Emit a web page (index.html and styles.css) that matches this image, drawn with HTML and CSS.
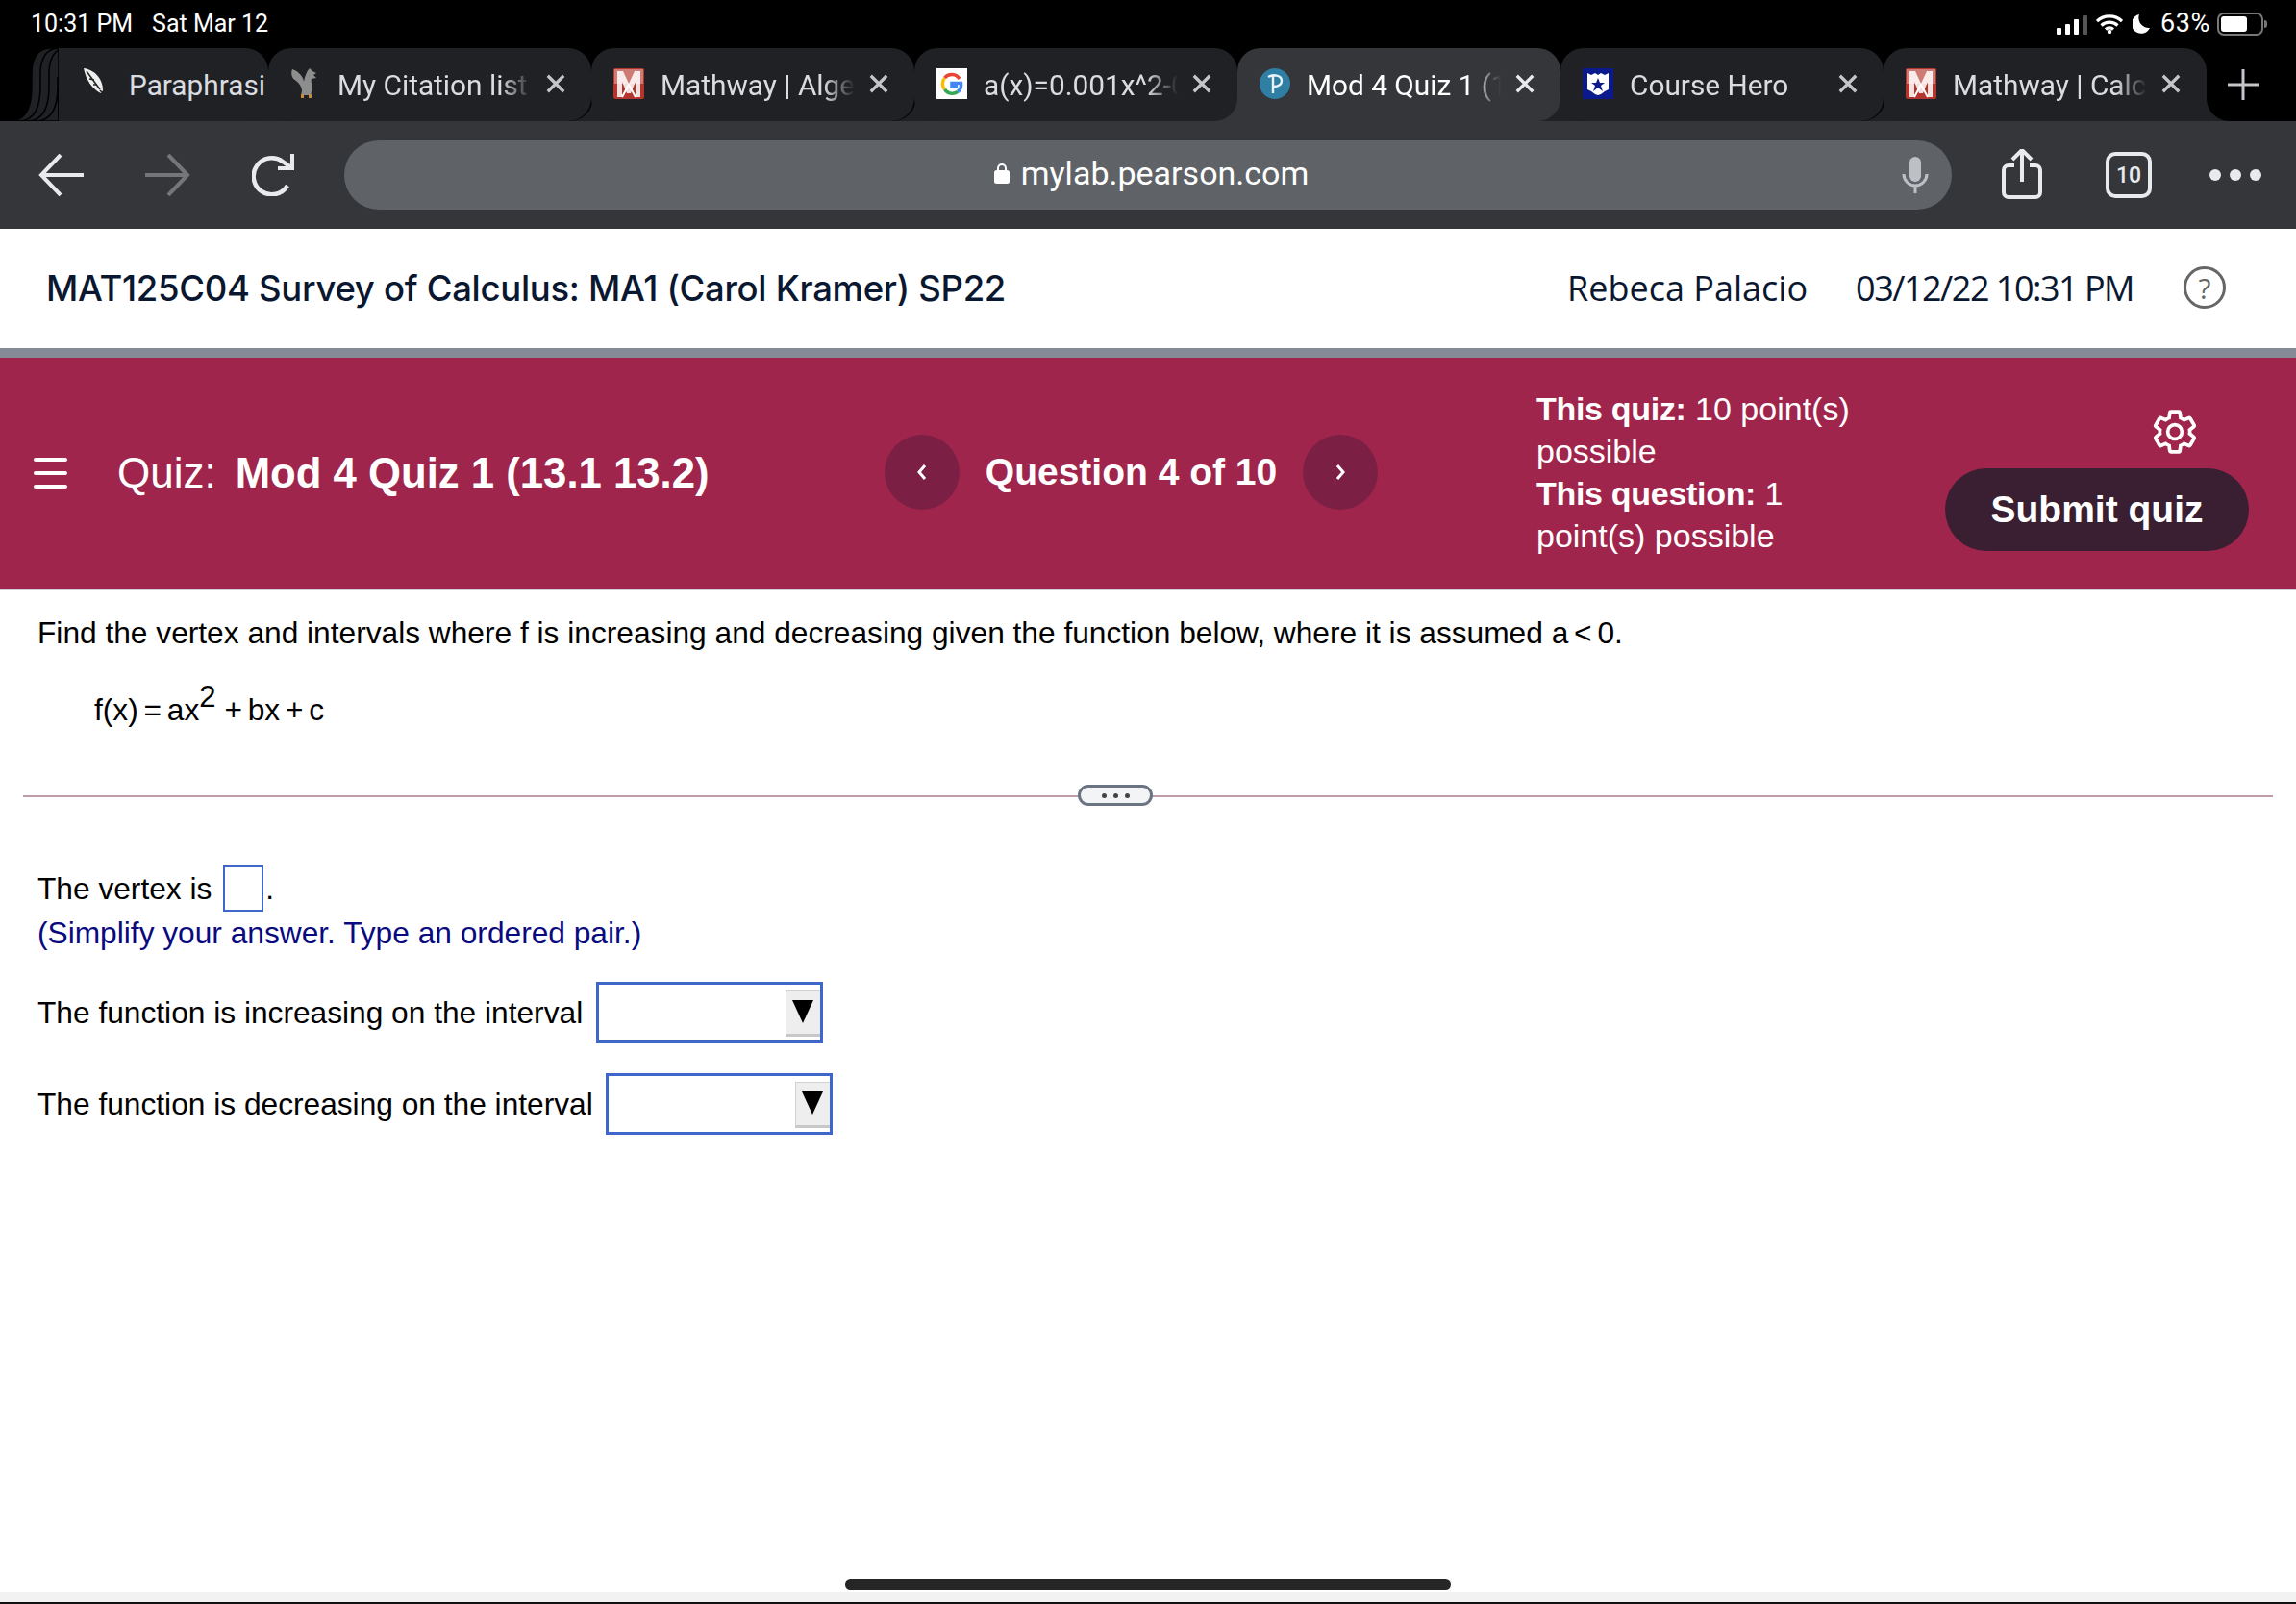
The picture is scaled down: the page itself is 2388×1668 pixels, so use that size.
FILE: index.html
```html
<!DOCTYPE html>
<html lang="en">
<head>
<meta charset="utf-8">
<title>Mod 4 Quiz 1</title>
<link rel="stylesheet" href="styles.css">
</head>
<body>
<div class="page">
  <div class="status">
    <div class="status-left"><span>10:31 PM</span><span>Sat Mar 12</span></div>
    <div class="status-right">
      <svg class="i-signal" viewBox="0 0 32 20"><rect x="0" y="13" width="5" height="7" rx="1" fill="#fff"/><rect x="9" y="9" width="5" height="11" rx="1" fill="#fff"/><rect x="18" y="4" width="5" height="16" rx="1" fill="#fff"/><rect x="27" y="0" width="5" height="20" rx="1" fill="#555"/></svg>
      <svg class="i-wifi" viewBox="0 0 28 20"><path d="M1 7a19 19 0 0 1 26 0M5.500 11.500a12.500 12.500 0 0 1 17 0M10 15.500a6 6 0 0 1 8 0" fill="none" stroke="#fff" stroke-width="3.200"/><circle cx="14" cy="18" r="2.200" fill="#fff"/></svg>
      <svg class="i-moon" viewBox="0 0 18 20"><path d="M7 0a10 10 0 1 0 11 14A10.500 10.500 0 0 1 7 0z" fill="#fff"/></svg>
      <span class="pct">63%</span>
      <div class="battery"><div class="battery-fill"></div></div>
    </div>
  </div>

  <div class="tabstrip">
    <svg class="stack" viewBox="0 0 61 76"><path d="M10 76C26 76 33 62 33 40V26C33 10 40 0 52 0H61V76z" fill="#202124" stroke="#000" stroke-width="1.500"/><path d="M19 76C35 76 42 62 42 40V26C42 10 49 0 61 0V76z" fill="#202124" stroke="#000" stroke-width="1.500"/><path d="M28 76C44 76 51 62 51 40V26C51 14 55 5 61 2V76z" fill="#202124" stroke="#000" stroke-width="1.500"/><path d="M37 76C53 76 60 62 60 40V30L61 76z" fill="#202124" stroke="#000" stroke-width="1.500"/></svg>
    <div class="tab tab-first">
      <svg class="fav fav-feather" viewBox="0 0 28 32"><path d="M0 0c10 1 20 10 20 23l-2 3C9 22 2 11 0 0z" fill="#eee"/><path d="M3 3l14 19M6 11l5 1M10 17l4 0M17 23l8 8" stroke="#222" stroke-width="1.500" fill="none"/></svg>
      <span class="tab-text">Paraphrasi</span>
    </div>
    <div class="tab">
      <svg class="fav" viewBox="0 0 32 32"><path d="M2 1c-2 5 0 10 4 12 4 3 6 7 6 11l-1 4h10l2-6c0-5-2-7-1-11l5-1-3-3 3-2-4-2-3-3c-3 3-5 8-6 14C14 10 9 3 2 1z" fill="#8d8d8d"/><rect x="11" y="27" width="3" height="4" fill="#c98a3c"/><rect x="19" y="27" width="3" height="4" fill="#c98a3c"/></svg>
      <span class="tab-text">My Citation list</span>
      <svg class="x" viewBox="0 0 24 24"><path d="M3 3l18 18M21 3L3 21"/></svg>
    </div>
    <div class="tab">
      <svg class="fav" viewBox="0 0 32 32"><rect width="32" height="32" rx="2" fill="#b3352d"/><rect x="1" y="1" width="30" height="15" fill="#cf7b75"/><path d="M4 30V3h6l6 13 6-13h6v27h-5V14l-5 12h-4L9 14v16z" fill="#fff" fill-opacity=".85"/><path d="M9 30l7-13 7 13" fill="none" stroke="#fff" stroke-width="2"/></svg>
      <span class="tab-text">Mathway | Algebra</span>
      <svg class="x" viewBox="0 0 24 24"><path d="M3 3l18 18M21 3L3 21"/></svg>
    </div>
    <div class="tab tab-before-active">
      <svg class="fav" viewBox="0 0 32 32"><rect width="32" height="32" fill="#fff"/><path d="M24 11a9.500 9.500 0 0 0-15.500-1" fill="none" stroke="#ea4335" stroke-width="3.500"/><path d="M8.500 10a9.500 9.500 0 0 0 0 12" fill="none" stroke="#fbbc05" stroke-width="3.500"/><path d="M8.500 22a9.500 9.500 0 0 0 13.500 2.500" fill="none" stroke="#34a853" stroke-width="3.500"/><path d="M22 24.500a9.500 9.500 0 0 0 3.500-9H16v3.500h6" fill="none" stroke="#4285f4" stroke-width="3.500"/></svg>
      <span class="tab-text">a(x)=0.001x^2-0.5x</span>
      <svg class="x" viewBox="0 0 24 24"><path d="M3 3l18 18M21 3L3 21"/></svg>
    </div>
    <div class="tab tab-active">
      <svg class="fav" viewBox="0 0 32 32"><circle cx="16" cy="16" r="16" fill="#2f7ea3"/><path d="M9 9c5-3 14-2 14 4s-6 6-9 6M14 8v18" fill="none" stroke="#e8f2f7" stroke-width="2.400"/></svg>
      <span class="tab-text">Mod 4 Quiz 1 (13.1 13.2)</span>
      <svg class="x" viewBox="0 0 24 24"><path d="M3 3l18 18M21 3L3 21"/></svg>
    </div>
    <div class="tab tab-after-active">
      <svg class="fav" viewBox="0 0 32 32"><rect width="32" height="32" fill="#0a1a8c"/><path d="M5 5l4 2 4-2 3 2 3-2 4 2 4-2v17l-4 2-4 3-3 1-3-1-4-3-4-2z" fill="#fff"/><path d="M16 10l2 5h5l-4 3 2 6-5-4-5 4 2-6-4-3h5z" fill="#0a1a8c"/></svg>
      <span class="tab-text">Course Hero</span>
      <svg class="x" viewBox="0 0 24 24"><path d="M3 3l18 18M21 3L3 21"/></svg>
    </div>
    <div class="tab tab-last">
      <svg class="fav" viewBox="0 0 32 32"><rect width="32" height="32" rx="2" fill="#b3352d"/><rect x="1" y="1" width="30" height="15" fill="#cf7b75"/><path d="M4 30V3h6l6 13 6-13h6v27h-5V14l-5 12h-4L9 14v16z" fill="#fff" fill-opacity=".85"/><path d="M9 30l7-13 7 13" fill="none" stroke="#fff" stroke-width="2"/></svg>
      <span class="tab-text">Mathway | Calculus</span>
      <svg class="x" viewBox="0 0 24 24"><path d="M3 3l18 18M21 3L3 21"/></svg>
    </div>
    <svg class="plus" viewBox="0 0 32 32"><path d="M16 0v32M0 16h32"/></svg>
  </div>

  <div class="toolbar">
    <svg class="nav-arrow" viewBox="0 0 48 44"><path d="M47 22H3M23 1L3 22l20 21"/></svg>
    <svg class="nav-arrow nav-forward" viewBox="0 0 48 44"><path d="M1 22h44M25 1l20 21-20 21"/></svg>
    <svg class="nav-reload" viewBox="0 0 46 44"><path d="M37 33a19 19 0 1 1-5-25l10 7" fill="none" stroke="#e8eaed" stroke-width="4.500"/><path d="M44 0v17H27v-4h13V0z" fill="#e8eaed"/></svg>
    <div class="urlbar">
      <div class="url"><svg class="lock" viewBox="0 0 16 22"><path d="M4 9V6a4 4 0 0 1 8 0v3" fill="none" stroke="#fff" stroke-width="2"/><rect y="8" width="16" height="14" rx="2.500" fill="#fff"/></svg><span>mylab.pearson.com</span></div>
      <svg class="mic" viewBox="0 0 28 38"><rect x="8" y="0" width="12" height="26" rx="6" fill="#bdc1c6"/><path d="M2 18a12 12 0 0 0 24 0M14 30v8" fill="none" stroke="#bdc1c6" stroke-width="3"/></svg>
    </div>
    <svg class="share" viewBox="0 0 42 52"><path d="M13 17H7a5 5 0 0 0-5 5v23a5 5 0 0 0 5 5h28a5 5 0 0 0 5-5V22a5 5 0 0 0-5-5h-6" fill="none" stroke="#e8eaed" stroke-width="4"/><path d="M21 34V2M11 11l10-10 10 10" fill="none" stroke="#e8eaed" stroke-width="4"/></svg>
    <div class="tabcount">10</div>
    <div class="dots"><i></i><i></i><i></i></div>
  </div>

  <header class="course">
    <h1>MAT125C04 Survey of Calculus: MA1 (Carol Kramer) SP22</h1>
    <div class="course-right">
      <span class="user">Rebeca Palacio</span>
      <span class="when">03/12/22 10:31 PM</span>
      <div class="help">?</div>
    </div>
  </header>

  <section class="quizbar">
    <div class="burger"><i></i><i></i><i></i></div>
    <div class="quiz-title">Quiz:<b>Mod 4 Quiz 1 (13.1 13.2)</b></div>
    <div class="qnav">
      <div class="qbtn"><svg viewBox="0 0 12 18"><path d="M9 2L3 9l6 7"/></svg></div>
      <b>Question 4 of 10</b>
      <div class="qbtn"><svg viewBox="0 0 12 18"><path d="M3 2l6 7-6 7"/></svg></div>
    </div>
    <div class="points"><b>This quiz:</b> 10 point(s) possible<br><b>This question:</b> 1 point(s) possible</div>
    <div class="actions">
      <svg class="gear" viewBox="0 0 24 24"><path d="M19.140 12.940c.04-.3.06-.61.06-.94 0-.32-.02-.64-.07-.94l2.030-1.580c.18-.14.23-.41.12-.61l-1.920-3.320c-.12-.22-.37-.29-.59-.22l-2.390.96c-.5-.38-1.030-.7-1.620-.94l-.36-2.540c-.04-.24-.24-.41-.48-.41h-3.840c-.24 0-.43.17-.47.41l-.36 2.540c-.59.24-1.130.57-1.620.94l-2.390-.96c-.22-.08-.47 0-.59.22L2.740 8.870c-.12.21-.08.47.12.61l2.030 1.580c-.05.3-.09.63-.09.94s.02.64.07.94l-2.030 1.580c-.18.14-.23.41-.12.61l1.920 3.320c.12.22.37.29.59.22l2.390-.96c.5.38 1.030.7 1.620.94l.36 2.540c.05.24.24.41.48.41h3.840c.24 0 .44-.17.47-.41l.36-2.540c.59-.24 1.130-.56 1.620-.94l2.390.96c.22.08.47 0 .59-.22l1.920-3.320c.12-.22.07-.47-.12-.61l-2.010-1.580z" fill="none" stroke="#fff" stroke-width="1.700"/><circle cx="12" cy="12" r="3.400" fill="none" stroke="#fff" stroke-width="1.700"/></svg>
      <div class="submit">Submit quiz</div>
    </div>
  </section>

  <main class="content">
    <p class="q">Find the vertex and intervals where f is increasing and decreasing given the function below, where it is assumed <span class="tight">a &lt; 0.</span></p>
    <p class="formula">f(x) = ax<sup>2</sup> + bx + c</p>
    <div class="divider"><div class="handle"><i></i><i></i><i></i></div></div>
    <p class="vertex">The vertex is <span class="answer"></span>.</p>
    <p class="hint">(Simplify your answer. Type an ordered pair.)</p>
    <div class="row row-inc">The function is increasing on the interval <span class="select"><span class="drop"><span class="tri"></span></span></span></div>
    <div class="row row-dec">The function is decreasing on the interval <span class="select"><span class="drop"><span class="tri"></span></span></span></div>
  </main>

  <footer class="home"><div class="home-bar"></div></footer>
  <div class="bottom-strip"></div>
</div>
</body>
</html>
```
FILE: styles.css
```css
* { box-sizing: border-box; }
html, body { margin: 0; padding: 0; }
body { background: #fff; font-family: "Liberation Sans", Arial, sans-serif; color: #000; }
.page { width: 2388px; height: 1668px; display: flex; flex-direction: column; overflow: hidden; }

.status { height: 50px; background: #000; color: #fff; display: flex; justify-content: space-between; align-items: center; padding: 0 34px 0 32px; font-family: Roboto, sans-serif; font-size: 25px; flex: none; }
.status-left { display: flex; gap: 20px; margin-top: -2px; }
.status-right { display: flex; align-items: center; }
.i-signal { width: 32px; height: 20px; margin-top: 2px; }
.i-wifi { width: 28px; height: 20px; margin-left: 9px; }
.i-moon { width: 18px; height: 20px; margin-left: 10px; }
.pct { margin-left: 11px; font-size: 27px; letter-spacing: .6px; margin-top: -2px; }
.battery { width: 48px; height: 24px; margin-left: 7px; border: 2px solid #777; border-radius: 7px; padding: 2px; position: relative; }
.battery-fill { width: 27px; height: 16px; background: #fff; border-radius: 3px; }
.battery::after { content: ""; position: absolute; right: -6px; top: 6px; width: 3px; height: 8px; background: #777; border-radius: 0 3px 3px 0; }

.tabstrip { height: 76px; background: #000; display: flex; position: relative; isolation: isolate; flex: none; font-family: Roboto, sans-serif; font-size: 29.800px; }
.stack { width: 61px; height: 76px; flex: none; }
.tab { flex: none; width: 336px; height: 76px; background: #202124; border-radius: 24px; position: relative; display: flex; align-items: center; padding-left: 23px; color: #dadce0; box-shadow: 1.500px 0 0 #000; }
.tab::before { content: ""; position: absolute; left: -24px; bottom: 0; width: 48px; height: 48px; background: #202124; z-index: -1; }
.tab-first { width: 218px; border-radius: 0 24px 24px 0; padding-left: 26px; box-shadow: none; }
.tab-first::before { display: none; }
.tab-before-active { box-shadow: none; }
.tab-active { background: #35363a; color: #fff; box-shadow: none; }
.tab-active::before { background: #35363a; }
.tab-active::after { content: ""; position: absolute; right: -24px; bottom: 0; width: 48px; height: 48px; background: #35363a; z-index: -1; }
.tab-last { box-shadow: none; border-radius: 24px 24px 0 24px; }
.tab-last::after { content: ""; position: absolute; right: -24px; bottom: 0; width: 24px; height: 24px; background: radial-gradient(circle at 100% 0, #000 23.500px, #202124 24.500px); }
.fav { width: 32px; height: 32px; flex: none; margin-top: -2px; }
.fav-feather { width: 28px; height: 32px; }
.tab-text { display: block; width: 202px; margin-left: 17px; white-space: nowrap; overflow: hidden; -webkit-mask-image: linear-gradient(90deg, #000 84%, transparent 100%); mask-image: linear-gradient(90deg, #000 84%, transparent 100%); }
.tab-first .tab-text { width: 145px; margin-left: 19px; -webkit-mask-image: none; mask-image: none; }
.x { width: 22px; height: 22px; flex: none; margin-left: 14px; margin-top: -2px; fill: none; stroke: #c4c6ca; stroke-width: 3.500; }
.tab-active .x { stroke: #e8eaed; }
.plus { width: 32px; height: 32px; flex: none; margin: 22px 0 0 22px; fill: none; stroke: #c4c6ca; stroke-width: 3; position: relative; }

.toolbar { height: 112px; background: #35363a; display: flex; align-items: center; padding-left: 40px; flex: none; }
.nav-arrow { width: 48px; height: 44px; flex: none; fill: none; stroke: #e8eaed; stroke-width: 4; }
.nav-forward { margin-left: 62px; stroke: #75767a; }
.nav-reload { width: 46px; height: 44px; margin-left: 64px; flex: none; }
.urlbar { width: 1672px; height: 72px; margin-left: 50px; background: #5f6368; border-radius: 36px; display: flex; align-items: center; justify-content: center; position: relative; flex: none; }
.url { display: flex; align-items: center; font-family: Roboto, sans-serif; font-size: 34px; color: #fff; margin-left: 7px; margin-top: -4px; }
.lock { width: 16px; height: 22px; margin-right: 12px; }
.mic { position: absolute; right: 24px; top: 17px; width: 28px; height: 38px; }
.share { width: 42px; height: 52px; margin-left: 52px; flex: none; margin-top: -3px; }
.tabcount { width: 48px; height: 48px; margin-left: 66px; border: 4px solid #e8eaed; border-radius: 10px; color: #e8eaed; font-family: Roboto, sans-serif; font-weight: 500; font-size: 23px; display: flex; align-items: center; justify-content: center; flex: none; }
.dots { display: flex; gap: 9px; margin-left: 60px; flex: none; }
.dots i { width: 12px; height: 12px; border-radius: 50%; background: #e8eaed; display: block; }

.course { height: 124px; background: #fff; display: flex; align-items: center; justify-content: space-between; padding: 0 73px 0 48px; flex: none; color: #0a1730; }
.course h1 { margin: 0; font-family: Inter, sans-serif; font-size: 36.500px; font-weight: 500; letter-spacing: -.3px; }
.course-right { display: flex; align-items: center; font-family: "Open Sans", sans-serif; font-size: 36px; margin-top: -2px; }
.when { margin-left: 50px; letter-spacing: -1.500px; }
.help { width: 44px; height: 44px; margin-left: 52px; border: 3.500px solid #666; border-radius: 50%; display: flex; align-items: center; justify-content: center; font-size: 30px; color: #666; }

.quizbar { height: 252px; background: #a0254c; border-top: 10px solid #858a96; border-bottom: 2px solid #cfd0d8; color: #fff; display: flex; align-items: center; flex: none; position: relative; }
.burger { width: 35px; margin-left: 35px; display: flex; flex-direction: column; gap: 10px; flex: none; }
.burger i { display: block; height: 4px; border-radius: 2px; background: #fff; }
.quiz-title { width: 798px; margin-left: 52px; font-size: 44px; flex: none; margin-top: -1px; }
.quiz-title b { margin-left: 20px; font-size: 43.700px; }
.qnav { display: flex; align-items: center; width: 513px; flex: none; font-size: 39px; justify-content: space-between; margin-top: -2px; }
.qbtn { width: 78px; height: 78px; border-radius: 50%; background: #7b1f45; display: flex; align-items: center; justify-content: center; }
.qbtn svg { width: 12px; height: 18px; fill: none; stroke: #fff; stroke-width: 3; }
.points { width: 350px; margin-left: 165px; font-size: 34px; line-height: 44px; flex: none; margin-top: -2px; }
.points b { letter-spacing: -.3px; }
.actions { margin-left: 75px; width: 316px; display: flex; flex-direction: column; align-items: center; flex: none; margin-top: 11.500px; }
.gear { width: 52px; height: 52px; margin-left: 162px; margin-bottom: 12.500px; }
.submit { width: 316px; height: 86px; border-radius: 43px; background: #3a1f33; display: flex; align-items: center; justify-content: center; font-weight: 700; font-size: 39px; }

.content { flex: 1; padding: 0 24px 0 39px; font-size: 31.700px; display: flex; flex-direction: column; min-height: 0; }
.q { margin: 25px 0 0; line-height: 38px; }
.tight { word-spacing: -3px; }
.formula { margin: 38px 0 0 59px; line-height: 46px; word-spacing: -3px; }
.formula sup { font-size: 31px; line-height: 0; vertical-align: 14px; margin-right: 3px; }
.divider { margin: 66px 0 0 -15px; height: 2px; background: #bf9aa9; position: relative; flex: none; }
.handle { position: absolute; left: 1097px; top: -11px; width: 78px; height: 22px; background: #f2f4f6; border: 3px solid #6a7482; border-radius: 11px; display: flex; align-items: center; justify-content: center; gap: 7px; }
.handle i { display: block; width: 5px; height: 5px; border-radius: 50%; background: #444; }
.vertex { margin: 71px 0 0; height: 48px; display: flex; align-items: center; white-space: pre; }
.answer { width: 42px; height: 48px; border: 2.500px solid #3f67c9; background: #fff; margin-left: 3px; margin-right: 2px; }
.hint { margin: 3px 0 0; color: #0a0a80; line-height: 38px; }
.row { display: flex; align-items: center; height: 64px; white-space: pre; }
.row-inc { margin-top: 32px; }
.row-dec { margin-top: 31px; }
.select { width: 236px; height: 64px; border: 3px solid #3f67c9; background: #fff; display: flex; justify-content: flex-end; align-items: flex-start; padding-top: 6px; margin-left: 5px; }
.row-dec .select { margin-left: 4px; }
.drop { width: 36px; height: 48px; background: #eeeeee; border: 1px solid #d0d0d0; border-right: 0; border-bottom: 3px solid #c8c8c8; display: flex; justify-content: center; padding-top: 9px; }
.tri { width: 0; height: 0; border-left: 11px solid transparent; border-right: 11px solid transparent; border-top: 24px solid #000; }

.home { height: 28px; display: flex; justify-content: center; flex: none; }
.home-bar { width: 630px; height: 11px; border-radius: 6px; background: #262626; margin-top: 14px; }
.bottom-strip { height: 12px; background: #f2f2f2; border-bottom: 2px solid #111; flex: none; }
```
